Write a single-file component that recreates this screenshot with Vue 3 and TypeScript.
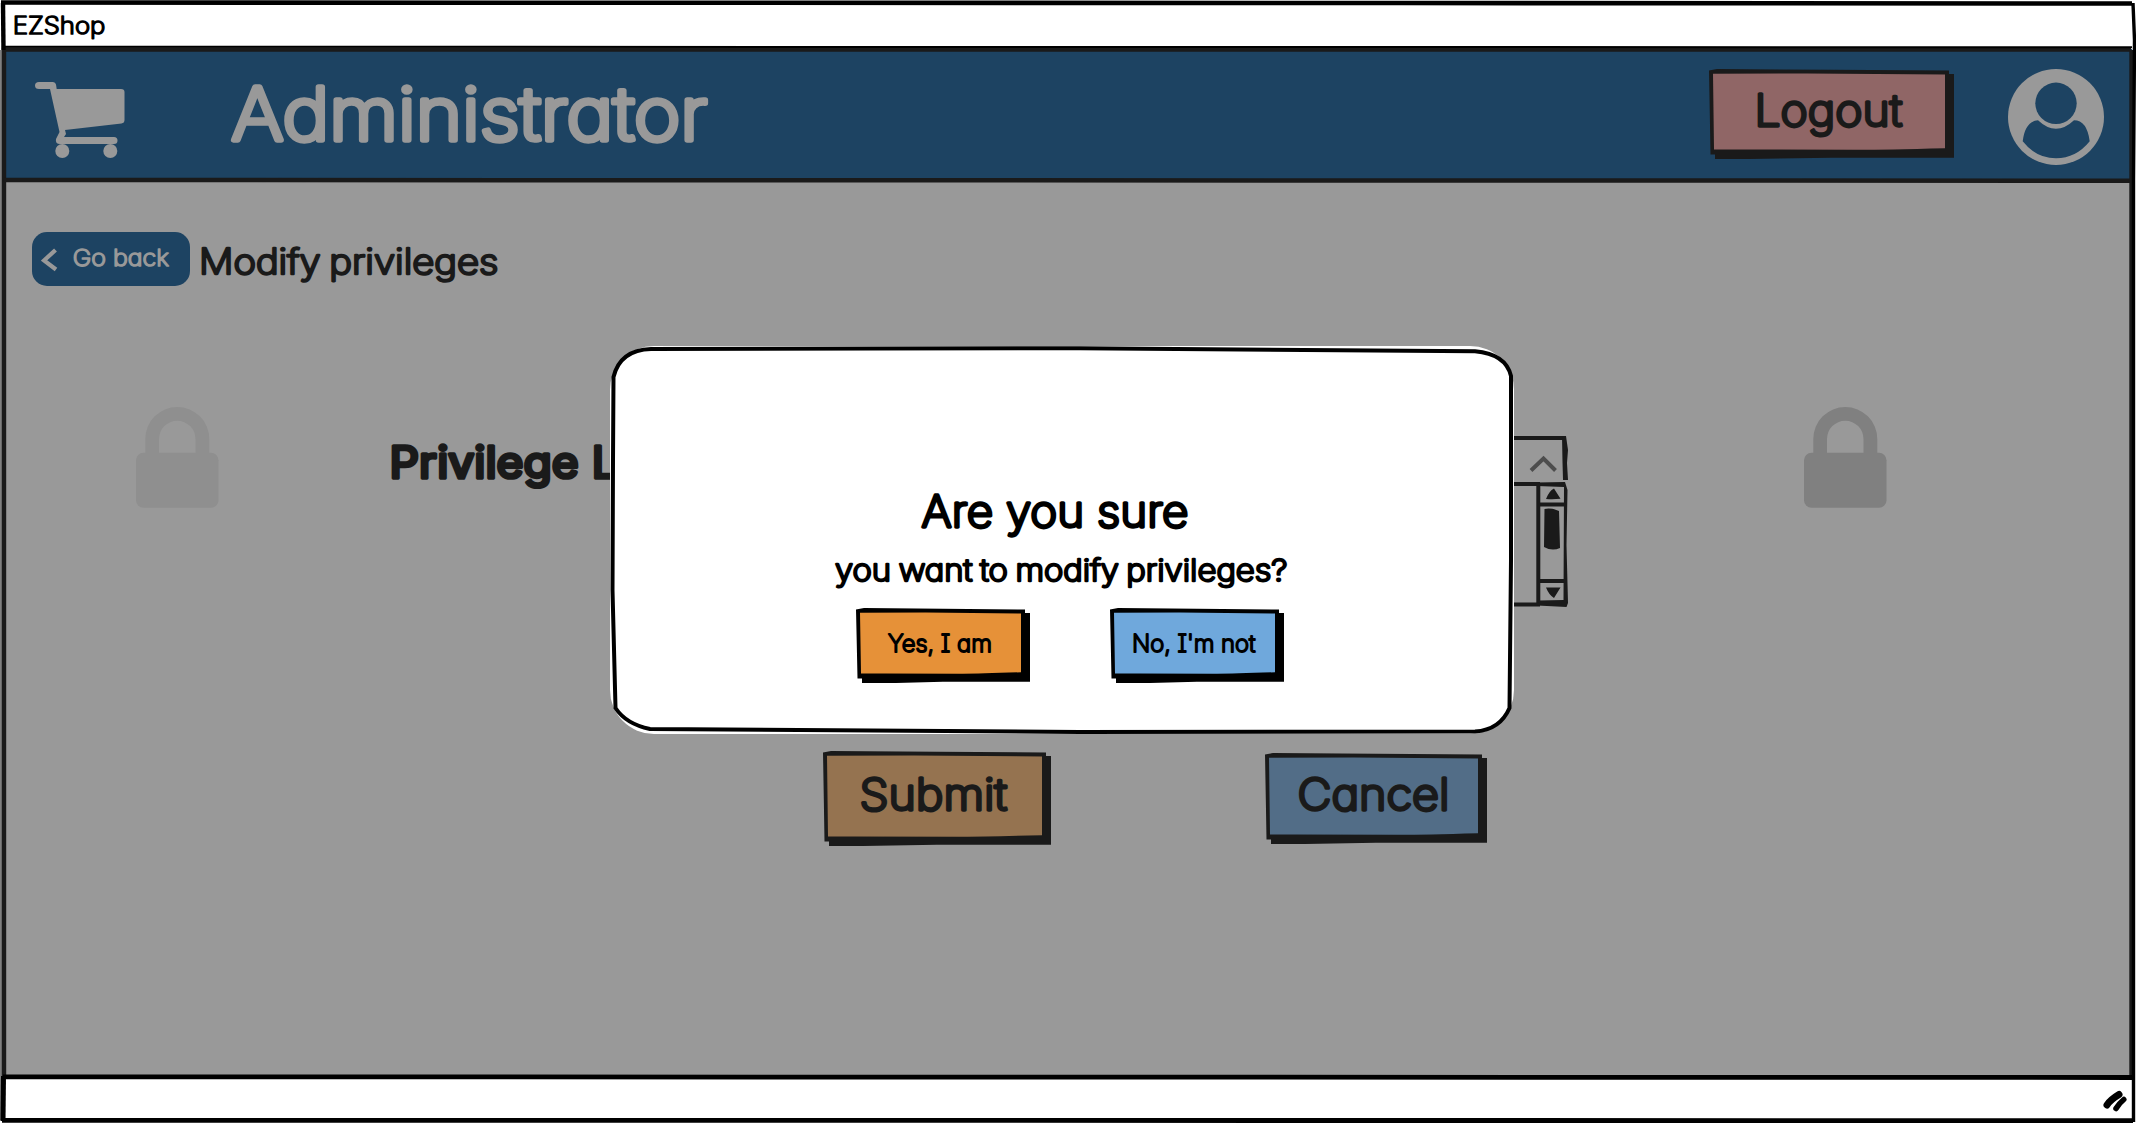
<script setup lang="ts">
import { h } from 'vue'
import type { FunctionalComponent } from 'vue'

interface LabelProps {
  text: string
  w: number
  cap: number
  pen: number
  weight?: number
  color?: string
}

const INTER_CAP = 0.727
const pad = document.createElement('canvas').getContext('2d')!

/* Marker-like lettering: light glyphs thickened with a round pen. */
const Lettering: FunctionalComponent<LabelProps> = (p) => {
  const size = (p.cap - p.pen) / INTER_CAP
  const weight = p.weight ?? 200
  pad.font = `${weight} ${size}px Inter`
  const m = pad.measureText(p.text)
  const ink = m.actualBoundingBoxLeft + m.actualBoundingBoxRight
  const k = (p.w - p.pen) / ink
  const color = p.color ?? '#1a1a1a'
  return h('svg', { class: 'lettering', width: p.w, height: p.cap }, [
    h('text', {
      x: p.pen / 2 + m.actualBoundingBoxLeft * k,
      y: p.cap - p.pen / 2,
      'font-size': size,
      'font-weight': weight,
      textLength: m.width * k,
      lengthAdjust: 'spacingAndGlyphs',
      fill: color,
      stroke: color,
      'stroke-width': p.pen,
    }, p.text),
  ])
}
Lettering.props = ['text', 'w', 'cap', 'pen', 'weight', 'color']

interface PlateProps {
  w: number
  h: number
  fill: string
  ink: string
}

/* Hand-drawn button face with a hard drop shadow. */
const Plate: FunctionalComponent<PlateProps> = (p) => {
  const { w, h: t } = p
  return h('svg', { class: 'plate', width: w, height: t, viewBox: `0 0 ${w} ${t}` }, [
    h('path', { fill: p.ink, d: `M0 1.5L8 0L${w * 0.5} .8L${w - 5} 1.5V5H${w}V${t - 1.3}H${w * 0.5}L40 ${t}H6V${t - 4.5}H1.5L.8 ${t * 0.5}Z` }),
    h('path', { fill: p.fill, d: `M4 4.8L${w * 0.4} 4.5L${w - 9} 5.5V${t - 10.8}Q${w * 0.7} ${t - 9.2} ${w * 0.6} ${t - 9.3}L30 ${t - 9.5}H5Z` }),
  ])
}
Plate.props = ['w', 'h', 'fill', 'ink']
</script>

<template>
  <div class="window">
    <div class="titlebar">
      <Lettering text="EZShop" :w="91" :cap="19" :pen="1.700" color="#000" />
    </div>

    <header class="header">
      <svg class="cart" width="90" height="77" viewBox="35 82 90 77" fill="#999">
        <path d="M39 82H53Q55.500 82 56 84.500L56.700 89H121Q124.500 89 124.500 92V120Q124.500 123 121.500 123.500L65 130L66 134L64 137H114Q117.500 137 117.500 140.500T114 144H60Q55 144 56 139L59.500 132L50 89H39Q35 89 35 85.500T39 82Z" />
        <ellipse cx="62.300" cy="151" rx="7" ry="7" />
        <ellipse cx="110.300" cy="151" rx="7" ry="7" />
      </svg>
      <Lettering class="heading" text="Administrator" :w="477" :cap="58" :pen="5.400" color="#999" />
      <div class="btn logout">
        <Plate :w="245" :h="90" fill="#906666" ink="#1a1a1a" />
        <Lettering text="Logout" :w="146" :cap="35" :pen="3.300" />
      </div>
      <svg class="avatar" width="96" height="96" viewBox="2008 68.700 96 96">
        <circle cx="2056" cy="116.700" r="48" fill="#999" />
        <circle cx="2056" cy="103" r="20.700" fill="#1d4362" />
        <path fill="#1d4362" d="M2038 120Q2056 137 2074 120Q2087 120 2089.700 141Q2076 158 2056 158T2022.700 141Q2025 121 2038 120Z" />
      </svg>
    </header>

    <main class="page">
      <div class="crumbs">
        <div class="back">
          <svg width="17" height="24" viewBox="0 0 17 24"><path d="M14.500 2L3 12.500L15 21.500" fill="none" stroke="#999" stroke-width="4.200" /></svg>
          <Lettering text="Go back" :w="97" :cap="18.700" :pen="1.700" color="#999" />
        </div>
        <Lettering class="subject tight" text="Modify privileges" :w="297" :cap="28" :pen="2.600" />
      </div>

      <div class="form">
        <svg class="lock" width="83" height="101" viewBox="0 0 83 101" fill="#8f8f8f">
          <path d="M9.300 46V32A32 32 0 0 1 73.300 32V46H59.500V32A18.200 18.200 0 0 0 23 32V46Z" />
          <rect y="45.700" width="82.500" height="55" rx="7.500" />
        </svg>
        <Lettering class="field" text="Privilege Level" :w="315" :cap="35" :pen="3.600" :weight="440" />
        <svg class="combo" width="668" height="172" viewBox="900 436 668 172" fill="none" stroke="#1a1a1a">
          <path d="M902 438V480M902 438H1565" stroke-width="4" />
          <path d="M1562 436H1566L1568 450L1567 463L1568 480H1563L1562.500 462Z" fill="#1a1a1a" stroke="none" />
          <path d="M1531 470.500L1543.500 458.500L1555.500 470.500" stroke="#4d4d4d" stroke-width="4" />
          <path d="M902 484V605M902 484H1540M902 604.500H1540M1538.300 484V603" stroke-width="4" />
          <path d="M1537 482.500L1565 482L1567.500 490L1566.500 545L1568 603L1566.500 607L1537 605.500L1539 600.500L1563.500 600L1564 487L1537 486Z" fill="#1a1a1a" stroke="none" />
          <path d="M1538 504.500H1565M1538 581H1565" stroke-width="3.800" />
          <path d="M1554 488.500L1560.500 498.800Q1553 499.500 1546 499Q1549 491 1554 488.500ZM1546 587.500H1560.500L1554 598Q1549 595 1546 587.500ZM1544.500 509Q1551 507.500 1559 511L1560 548Q1552 551.500 1544 547Z" fill="#1a1a1a" stroke="none" />
        </svg>
        <svg class="lock end" width="83" height="101" viewBox="0 0 83 101" fill="#808080">
          <path d="M9.300 46V32A32 32 0 0 1 73.300 32V46H59.500V32A18.200 18.200 0 0 0 23 32V46Z" />
          <rect y="45.700" width="82.500" height="55" rx="7.500" />
        </svg>
      </div>

      <div class="actions">
        <div class="btn submit">
          <Plate :w="228" :h="95" fill="#957350" ink="#1a1a1a" />
          <Lettering text="Submit" :w="147" :cap="35" :pen="3.300" />
        </div>
        <div class="btn cancel">
          <Plate :w="222" :h="91" fill="#526d87" ink="#1a1a1a" />
          <Lettering text="Cancel" :w="149" :cap="35" :pen="3.300" />
        </div>
      </div>
    </main>

    <footer class="status">
      <svg width="26" height="22" viewBox="2102 1090 26 22" fill="none" stroke="#000" stroke-linecap="round">
        <path d="M2107 1105Q2110 1100 2119 1094.500" stroke-width="7" />
        <path d="M2116 1108.500Q2119 1103.500 2123.800 1099.500" stroke-width="5.500" />
      </svg>
    </footer>

    <svg class="frame" width="2136" height="1124" viewBox="0 0 2136 1124" fill="none">
      <path d="M4 48V1076M2131.500 50V1076" stroke="#1a1a1a" stroke-width="4.400" />
      <path d="M3.500 49.500H2131M4 180L600 180.200L2131 180.700" stroke="#1a1a1a" stroke-width="4.500" />
      <path d="M4 46.700L900 47L2132 47.200" stroke="#000" stroke-width="2" />
      <path d="M1 2.500Q700 4 1400 3L2132 3.500" stroke="#000" stroke-width="4.600" />
      <path d="M3 3L3.500 50" stroke="#000" stroke-width="4.400" />
      <path d="M2133 3L2134.500 40L2133.500 180V1122" stroke="#000" stroke-width="3.400" />
      <path d="M3 1076.800L2133 1077.500M2 1120.300L2133 1120.600" stroke="#000" stroke-width="4.800" />
      <path d="M3.500 1076L3 1121" stroke="#000" stroke-width="5" />
      <path d="M1 50V1120" stroke="#000" stroke-width="1" />
    </svg>

    <div class="dialog">
      <svg class="sheet" width="906" height="390" viewBox="609 345 906 390">
        <rect x="610" y="346" width="904" height="388" rx="44" fill="#fff" />
        <path d="M651 349L870 348.500L1080 348.200L1475 351.200Q1506 354 1511 376L1511 560L1509.500 708Q1500 730 1475 731.500L1080 732L650 729Q626 724 615.500 708L612.500 590L613 460L613.500 377Q620 350 651 349Z" fill="#fff" stroke="#000" stroke-width="4" />
      </svg>
      <Lettering text="Are you sure" :w="267" :cap="35" :pen="3.300" color="#000" />
      <Lettering class="question tight" text="you want to modify privileges?" :w="452" :cap="24" :pen="2.400" color="#000" />
      <div class="choices">
        <div class="btn choice">
          <Plate :w="174" :h="75" fill="#e69138" ink="#000" />
          <Lettering class="yes" text="Yes, I am" :w="104" :cap="19.300" :pen="1.900" color="#000" />
        </div>
        <div class="btn choice">
          <Plate :w="174" :h="75" fill="#6fa8dc" ink="#000" />
          <Lettering class="no" text="No, I'm not" :w="123" :cap="19.300" :pen="1.900" color="#000" />
        </div>
      </div>
    </div>
  </div>
</template>

<style>
body {
  margin: 0;
}
.lettering {
  display: block;
  flex: none;
  overflow: visible;
  font-family: Inter, "Noto Sans", sans-serif;
}
.lettering text {
  font-feature-settings: "cv11", "cv08";
  stroke-linejoin: round;
  stroke-linecap: round;
  white-space: pre;
}
.lettering.tight text {
  word-spacing: -0.05em;
}
.plate {
  position: absolute;
  left: 0;
  top: 0;
}
</style>

<style scoped>
.window {
  position: relative;
  width: 2136px;
  height: 1124px;
  display: flex;
  flex-direction: column;
  overflow: hidden;
  background: #fff;
}
svg {
  display: block;
  flex: none;
}
.titlebar {
  height: 49px;
  box-sizing: border-box;
  padding: 15.5px 0 0 13.5px;
}
.header {
  height: 132px;
  margin: 0 4px;
  box-sizing: border-box;
  padding: 20px 28px 0 31px;
  display: flex;
  align-items: flex-start;
  background: #1d4362;
}
.cart {
  margin-top: 13px;
}
.heading {
  margin: 16px 0 0 106px;
}
.btn {
  position: relative;
  flex: none;
  box-sizing: border-box;
}
.btn > .lettering {
  position: relative;
}
.logout {
  width: 245px;
  height: 90px;
  margin-left: auto;
  padding: 24px 0 0 48px;
}
.avatar {
  margin-left: 54px;
}
.page {
  height: 895px;
  margin: 0 4px;
  box-sizing: border-box;
  padding-top: 51px;
  background: #999;
}
.crumbs {
  display: flex;
  height: 54px;
  padding-left: 28px;
}
.back {
  width: 158px;
  height: 54px;
  box-sizing: border-box;
  padding: 15.5px 0 0 8.5px;
  display: flex;
  gap: 15px;
  border-radius: 15px;
  background: #1d4362;
}
.subject {
  margin: 15px 0 0 11px;
}
.form {
  display: flex;
  align-items: flex-start;
  margin-top: 121px;
  padding-left: 132px;
  height: 201px;
}
.field {
  margin: 37.5px 0 0 172px;
}
.combo {
  margin: 29px 0 0 194px;
}
.lock.end {
  margin-left: 236px;
}
.actions {
  display: flex;
  align-items: flex-start;
  margin-top: 142.5px;
  padding-left: 819px;
}
.submit {
  width: 228px;
  height: 95px;
  padding: 26px 0 0 38px;
}
.cancel {
  width: 222px;
  height: 91px;
  margin: 2px 0 0 214px;
  padding: 24px 0 0 33px;
}
.status {
  height: 48px;
  box-sizing: border-box;
  padding: 14px 8px 0 0;
  display: flex;
  justify-content: flex-end;
}
.frame {
  position: absolute;
  left: 0;
  top: 0;
}
.dialog {
  position: absolute;
  left: 609px;
  top: 345px;
  width: 906px;
  height: 390px;
  box-sizing: border-box;
  padding-top: 149px;
  display: flex;
  flex-direction: column;
  align-items: center;
}
.sheet {
  position: absolute;
  left: 0;
  top: 0;
}
.dialog > .lettering {
  position: relative;
  left: -7.5px;
}
.dialog > .question {
  left: -1px;
  margin-top: 29px;
}
.choices {
  position: relative;
  align-self: flex-start;
  display: flex;
  gap: 80px;
  margin: 26px 0 0 246.5px;
}
.choice {
  width: 174px;
  height: 75px;
  padding-top: 25.5px;
}
.yes {
  margin-left: 31px;
}
.no {
  margin-left: 23px;
}
</style>
